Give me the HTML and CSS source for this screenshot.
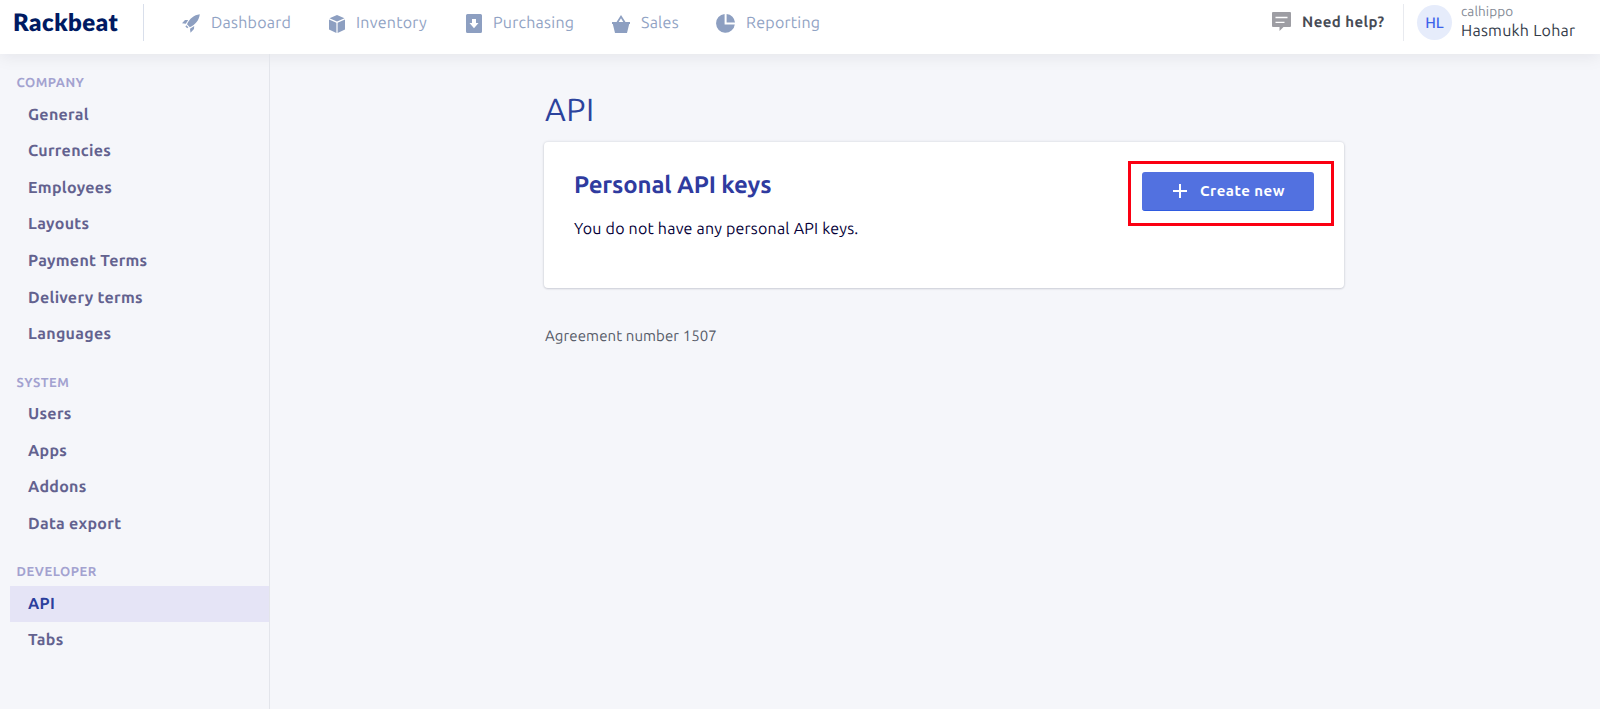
FILE: index.html
```html
<!DOCTYPE html>
<html lang="en">
<head>
    <meta charset="UTF-8">
    <meta name="viewport" content="width=device-width, initial-scale=1.0">
    <title>API - Rackbeat</title>
    <link rel="stylesheet" href="styles.css">
</head>
<body>

    <!-- Top bar -->
    <header class="topbar">
        <a href="#" class="logo">Rackbeat</a>
        <nav class="main-nav">
            <a href="#" class="nav-dashboard">
                <svg width="18" height="19" viewBox="0 0 18 19"><path d="M17.800.2C12 1 7.500 4.500 5 10.200L7.800 13.200C13.500 10.500 17 6.500 17.800.2zM6.200 6 3 6 0 9.200l3.800.6zM12.200 12 12 15l-3.500 3.800-.5-4zM4.300 11.200l-.9 1.300 1.800 1.800 1.200-1z"/></svg>
                <span>Dashboard</span>
            </a>
            <a href="#" class="nav-inventory">
                <svg width="16" height="18" viewBox="0 0 16 18"><path d="M8 0l7.500 3.200L8 6.500.5 3.200zM0 4.500l7.400 3.200V18L0 14.600zM16 4.500v10.100L8.600 18V7.700z"/></svg>
                <span>Inventory</span>
            </a>
            <a href="#" class="nav-purchasing">
                <svg width="16" height="19" viewBox="0 0 16 19"><path fill-rule="evenodd" d="M1.500 0h13A1.500 1.500 0 0 1 16 1.500v16a1.500 1.500 0 0 1-1.500 1.500h-13A1.500 1.500 0 0 1 0 17.500v-16A1.500 1.500 0 0 1 1.500 0zM6 5v4H3.500L8 14.200 12.500 9H10V5z"/></svg>
                <span>Purchasing</span>
            </a>
            <a href="#" class="nav-sales">
                <svg width="18" height="18" viewBox="0 0 18 18"><path fill-rule="evenodd" d="M9 0l4.500 7H18v2h-.8L15 18H3L.8 9H0V7h4.500zM9 3.200 6.700 7h4.600z"/></svg>
                <span>Sales</span>
            </a>
            <a href="#" class="nav-reporting">
                <svg width="19" height="19" viewBox="0 0 19 19"><path d="M8.600 0v10.500H18.800A9.400 9.400 0 1 1 8.600 0zM10.600 0A9 9 0 0 1 19 8.600h-8.400z"/></svg>
                <span>Reporting</span>
            </a>
        </nav>
        <a href="#" class="help">
            <svg width="19" height="19" viewBox="0 0 19 19"><path fill="#9d9da3" d="M1 0h17a1 1 0 0 1 1 1v13a1 1 0 0 1-1 1h-6.500L7.500 19v-4H1a1 1 0 0 1-1-1V1a1 1 0 0 1 1-1z"/><path stroke="#fff" stroke-width="1.300" d="M3.500 5.500h12M3.500 10.300h9"/></svg>
            <span>Need help?</span>
        </a>
        <div class="user">
            <div class="avatar">HL</div>
            <div class="user-info">
                <div class="company">calhippo</div>
                <div class="user-name">Hasmukh Lohar</div>
            </div>
        </div>
    </header>

    <div class="page">
        <!-- Settings menu -->
        <aside class="sidebar">
            <h4>COMPANY</h4>
            <ul>
                <li><a href="#">General</a></li>
                <li><a href="#">Currencies</a></li>
                <li><a href="#">Employees</a></li>
                <li><a href="#">Layouts</a></li>
                <li><a href="#">Payment Terms</a></li>
                <li><a href="#">Delivery terms</a></li>
                <li><a href="#">Languages</a></li>
            </ul>
            <h4>SYSTEM</h4>
            <ul>
                <li><a href="#">Users</a></li>
                <li><a href="#">Apps</a></li>
                <li><a href="#">Addons</a></li>
                <li><a href="#">Data export</a></li>
            </ul>
            <h4>DEVELOPER</h4>
            <ul>
                <li><a href="#" class="active">API</a></li>
                <li><a href="#">Tabs</a></li>
            </ul>
        </aside>

        <main class="content">
            <h1>API</h1>
            <section class="card">
                <div class="card-text">
                    <h2>Personal API keys</h2>
                    <p>You do not have any personal API keys.</p>
                </div>
                <div class="highlight">
                    <button class="btn">
                        <svg width="14" height="14" viewBox="0 0 14 14"><path stroke="#fff" stroke-width="2" d="M7 0v14M0 7h14"/></svg>
                        <span>Create new</span>
                    </button>
                </div>
            </section>
            <p class="agreement">Agreement number 1507</p>
        </main>
    </div>

</body>
</html>
```

FILE: styles.css
```css
* {
    box-sizing: border-box;
}

body {
    margin: 0;
    min-height: 709px;
    display: flex;
    flex-direction: column;
    background-color: #f5f6fa;
    font-family: "Ubuntu", "Noto Sans", sans-serif;
    font-size: 16px;
    color: #050038;
    text-rendering: geometricPrecision;
}

a {
    color: inherit;
    text-decoration: none;
}

h1, h2, h4, p, ul {
    margin: 0;
    padding: 0;
}

svg {
    display: block;
    flex: none;
}

/* Top bar */
.topbar {
    display: flex;
    align-items: flex-start;
    height: 54px;
    background-color: #fff;
    box-shadow: 0 2px 18px rgba(20, 20, 40, 0.08);
    white-space: nowrap;
}

.logo {
    width: 144px;
    height: 37px;
    margin-top: 4px;
    padding-left: 13px;
    border-right: 1px solid #d9dfeb;
    font-family: "Lato", sans-serif;
    font-size: 24px;
    font-weight: 800;
    letter-spacing: 0.5px;
    line-height: 37px;
    color: #001a62;
}

.main-nav {
    display: flex;
    flex: 1;
    padding-left: 38px;
}

.main-nav a {
    display: flex;
    align-items: center;
    height: 47px;
    color: #91a3c4;
}

.main-nav svg {
    fill: #8d9fc1;
    margin-right: 11px;
}

.main-nav a span {
    margin-top: -1px;
    letter-spacing: 0.25px;
}

.nav-dashboard { width: 147px; }
.nav-inventory { width: 137px; }
.nav-purchasing { width: 146px; }
.nav-sales { width: 104px; }

.help {
    display: flex;
    align-items: center;
    width: 131px;
    height: 43px;
    color: #474b55;
    font-size: 15px;
    font-weight: 700;
    letter-spacing: 0.45px;
}

.help svg {
    margin-right: 11px;
}

.user {
    display: flex;
    width: 197px;
    height: 37px;
    margin-top: 4px;
    padding-left: 13px;
    border-left: 1px solid #e8eaef;
}

.avatar {
    width: 35px;
    height: 35px;
    margin: 1px 9px 0 0;
    border-radius: 50%;
    background-color: #e6ecfb;
    color: #3d63ea;
    font-size: 15px;
    font-weight: 500;
    line-height: 36px;
    text-align: center;
}

.company {
    color: #858b96;
    font-size: 13.500px;
    letter-spacing: 0.1px;
    line-height: 15px;
}

.user-name {
    color: #343c49;
    font-size: 16px;
    letter-spacing: 0.25px;
    line-height: 24px;
}

/* Settings menu */
.page {
    display: flex;
    flex: 1;
}

.sidebar {
    width: 270px;
    padding: 20px 0 0 10px;
    border-right: 1px solid #e3e5eb;
}

.sidebar h4 {
    height: 22.500px;
    padding-left: 6.500px;
    color: #a3a2d0;
    font-size: 13px;
    font-weight: 600;
    letter-spacing: 0.5px;
    line-height: 19px;
}

.sidebar ul {
    margin-bottom: 20.500px;
    list-style: none;
}

.sidebar li a {
    display: block;
    height: 36.670px;
    padding-left: 18px;
    color: #63628f;
    font-weight: 600;
    letter-spacing: 0.3px;
    line-height: 37px;
}

.sidebar .active {
    background-color: #e5e4f6;
    color: #2c3f9d;
}

/* Content */
.content {
    width: 800px;
    margin-left: 274px;
    padding-top: 34px;
}

.content h1 {
    height: 54px;
    padding-left: 1px;
    color: #2c439d;
    font-size: 32px;
    font-weight: 400;
    letter-spacing: 0.5px;
    line-height: 45px;
}

.card {
    display: flex;
    justify-content: space-between;
    height: 146px;
    padding: 19px 10px 0 30px;
    border-radius: 4px;
    background-color: #fff;
    box-shadow: 0 0 2px 1px rgba(30, 35, 60, 0.08), 0 1px 2px rgba(30, 35, 60, 0.12);
}

.card h2 {
    margin-top: 6px;
    color: #2f3b9f;
    font-size: 24px;
    font-weight: 600;
    letter-spacing: -0.15px;
    line-height: 36px;
}

.card p {
    margin-top: 14px;
    letter-spacing: 0.21px;
    line-height: 24px;
}

.highlight {
    width: 206px;
    height: 65px;
    padding: 8px 8px 0 11px;
    border: 3px solid #fb0012;
}

.btn {
    display: flex;
    align-items: center;
    width: 172px;
    height: 39px;
    padding: 0 0 0 31px;
    border: 0;
    border-bottom: 1px solid #2f5be0;
    border-radius: 3px;
    background-color: #5271e0;
    color: #fff;
    font-family: inherit;
    font-size: 15px;
    font-weight: 600;
    letter-spacing: 0.5px;
    white-space: nowrap;
}

.btn svg {
    margin-right: 13px;
}

.btn span {
    margin-top: -1px;
}

.agreement {
    margin-top: 36px;
    padding-left: 1px;
    color: #555b68;
    font-size: 15px;
    letter-spacing: 0.1px;
    line-height: 24px;
}
```
